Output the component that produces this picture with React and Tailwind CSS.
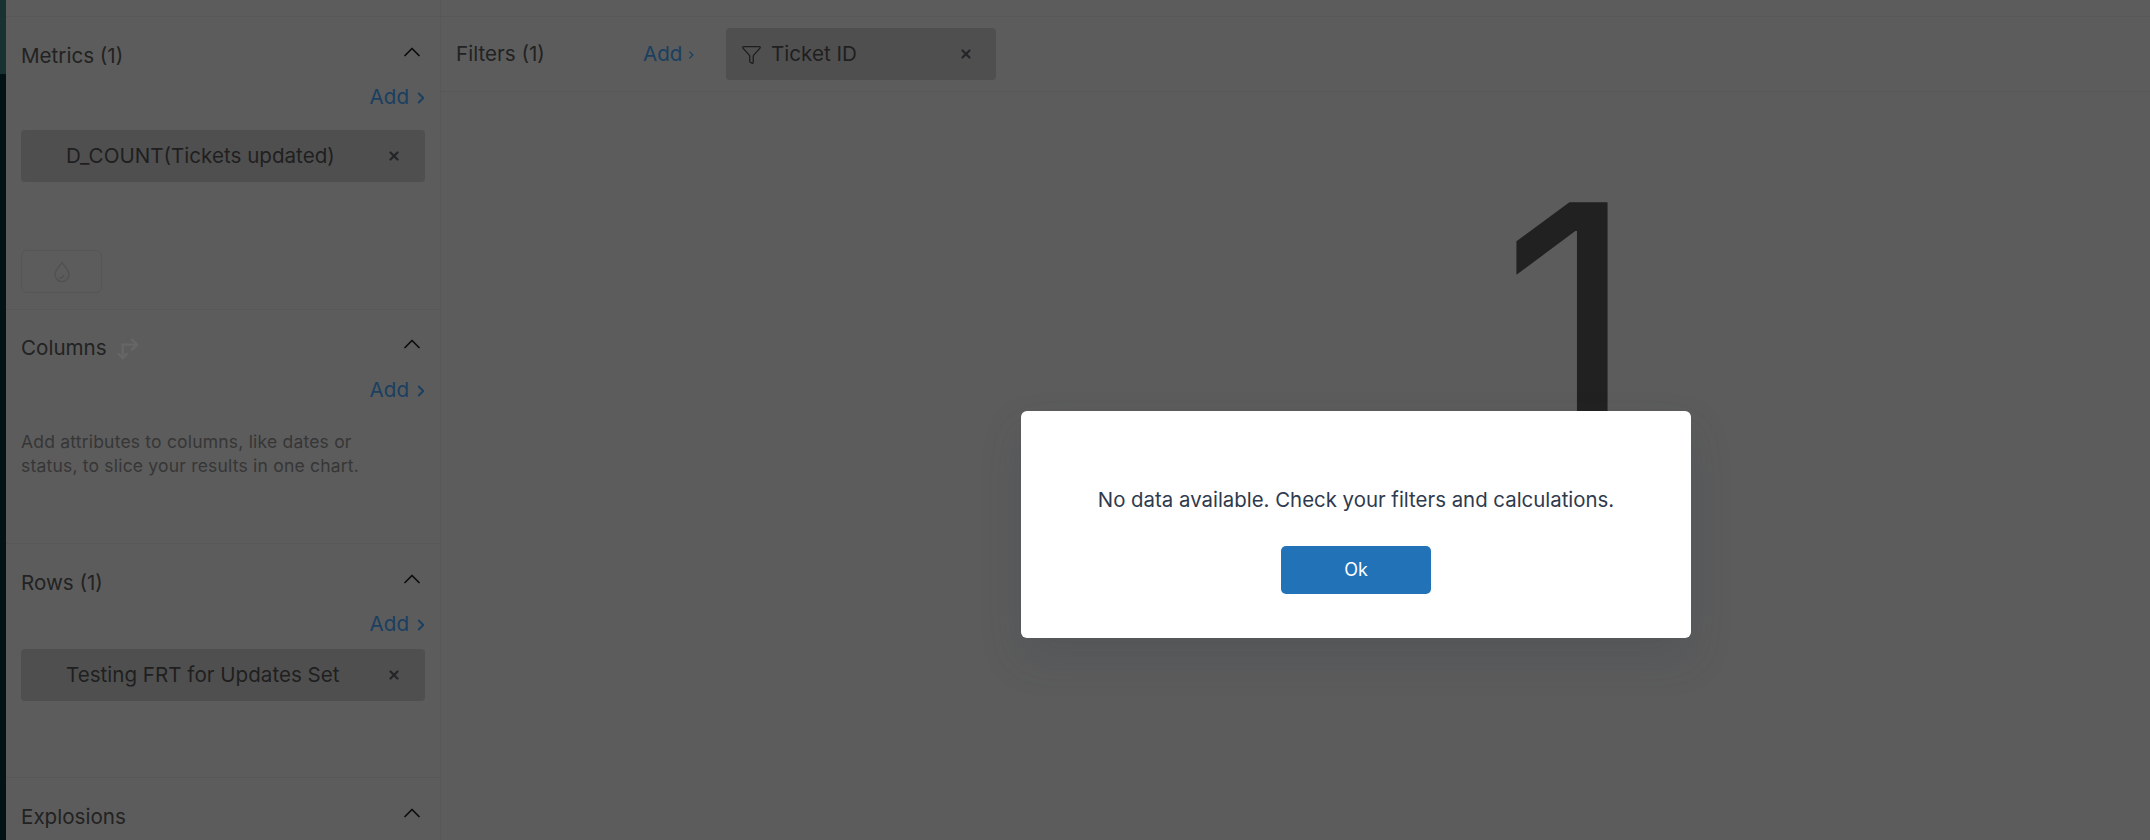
import React from 'react';
import { ChevronUp, ChevronRight, X, Filter } from 'lucide-react';

const AddLink = () => (
    <div className="flex justify-end items-center h-6 leading-6 text-[20.6px] text-[#1a3f60]">
        Add
        <ChevronRight size={18} strokeWidth={2.5} className="-mr-[5px] ml-[3px] mt-[2px]" />
    </div>
);

const Chip = ({ label }) => (
    <div className="flex items-center justify-between h-[52px] rounded-[4px] bg-[#4f4f4f] pl-[45px] pr-[24px] text-[20.6px] text-[#1f1f1f]">
        <span>{label}</span>
        <X size={14} strokeWidth={4} className="text-[#24262a]" />
    </div>
);

const SectionHeader = ({ children }) => (
    <div className="flex items-start justify-between h-6 pr-[14px] text-[20.6px] leading-6 text-[#222222]">
        <div className="flex items-center">{children}</div>
        <ChevronUp size={28} strokeWidth={1.5} className="text-[#0c0c0c] -mt-[6px]" />
    </div>
);

const DropletIcon = () => (
    <svg width="18" height="22" viewBox="0 0 18 22" fill="none" stroke="#505050" strokeWidth="1.25">
        <path d="M9 1.5C6.5 5.5 2 9 2 13.5a7 7 0 0 0 14 0C16 9 11.5 5.5 9 1.5Z" />
        <path d="M6 17c2.2.5 4.2-.6 4.8-2.8" />
    </svg>
);

const CornerArrowsIcon = () => (
    <svg width="23" height="23" viewBox="0 0 24 24" fill="none" stroke="#666666" strokeWidth="2.5">
        <path d="M7 22V8h15" />
        <path d="M16 2l6 6-6 6" />
        <path d="M2 17l5 5 5-5" />
    </svg>
);

export default function App() {
    return (
        <div className="relative flex h-[840px] w-[2150px] overflow-hidden bg-[#5c5c5c] font-['Inter',sans-serif]">
            {/* left nav edge */}
            <div className="flex w-[6px] shrink-0 flex-col bg-[#031315]">
                <div className="h-[74px] bg-[#1a3131]"></div>
            </div>

            {/* SIDEBAR */}
            <div className="w-[435px] shrink-0 border-r border-[#585858]">
                <div className="h-[17px] border-b border-[#575757]"></div>

                <div className="h-[293px] border-b border-[#575757] pl-[15px] pt-[27px]">
                    <SectionHeader>Metrics (1)</SectionHeader>
                    <div className="mt-[17px] pr-[15px]">
                        <AddLink />
                        <div className="mt-[21px]"><Chip label="D_COUNT(Tickets updated)" /></div>
                        <div className="mt-[68px] flex h-[43px] w-[81px] items-center justify-center rounded-[6px] border border-[#565656]">
                            <DropletIcon />
                        </div>
                    </div>
                </div>

                <div className="h-[234px] border-b border-[#575757] pl-[15px] pt-[26px]">
                    <SectionHeader>
                        Columns
                        <span className="ml-[9px]"><CornerArrowsIcon /></span>
                    </SectionHeader>
                    <div className="mt-[18px] pr-[15px]">
                        <AddLink />
                        <p className="mt-[28px] text-[17.5px] leading-[24px] tracking-[0.2px] text-[#363636]">
                            Add attributes to columns, like dates or<br />
                            status, to slice your results in one chart.
                        </p>
                    </div>
                </div>

                <div className="h-[234px] border-b border-[#575757] pl-[15px] pt-[27px]">
                    <SectionHeader>Rows (1)</SectionHeader>
                    <div className="mt-[17px] pr-[15px]">
                        <AddLink />
                        <div className="mt-[13px]"><Chip label="Testing FRT for Updates Set" /></div>
                    </div>
                </div>

                <div className="pl-[15px] pt-[27px]">
                    <SectionHeader>Explosions</SectionHeader>
                </div>
            </div>

            {/* MAIN */}
            <div className="flex min-w-0 flex-1 flex-col">
                <div className="h-[17px] shrink-0 border-b border-[#575757]"></div>
                <div className="flex h-[75px] shrink-0 items-center border-b border-[#585858] pl-[15px]">
                    <div className="w-[187px] text-[20.6px] leading-6 text-[#222222]">Filters (1)</div>
                    <div className="w-[83px]"><div className="w-[50px]"><AddLink /></div></div>
                    <div className="flex h-[52px] w-[270px] items-center rounded-[4px] bg-[#4f4f4f] pl-[15px] pr-[23px] text-[20.6px] text-[#1f1f1f]">
                        <Filter size={21} strokeWidth={1.5} className="mr-[9px] text-[#1e1e1e]" />
                        <span className="flex-1">Ticket ID</span>
                        <X size={14} strokeWidth={4} className="text-[#24262a]" />
                    </div>
                </div>
                <div className="flex flex-1 justify-end overflow-hidden pr-[513px] pt-[65px]">
                    <div className="text-[335px] leading-[335px] text-[#212121]">1</div>
                </div>
            </div>

            {/* MODAL */}
            <div className="absolute left-[1021px] top-[411px] flex h-[227px] w-[670px] flex-col items-center rounded-[6px] bg-white pt-[75px] shadow-[0_20px_40px_rgba(50,65,75,0.2)]">
                <p className="text-[20.4px] leading-[28px] text-[#2f3a4e]">No data available. Check your filters and calculations.</p>
                <button className="mt-[32px] h-[48px] w-[150px] rounded-[5px] bg-[#2272b8] pb-[2px] text-[18px] text-white">Ok</button>
            </div>
        </div>
    );
}
